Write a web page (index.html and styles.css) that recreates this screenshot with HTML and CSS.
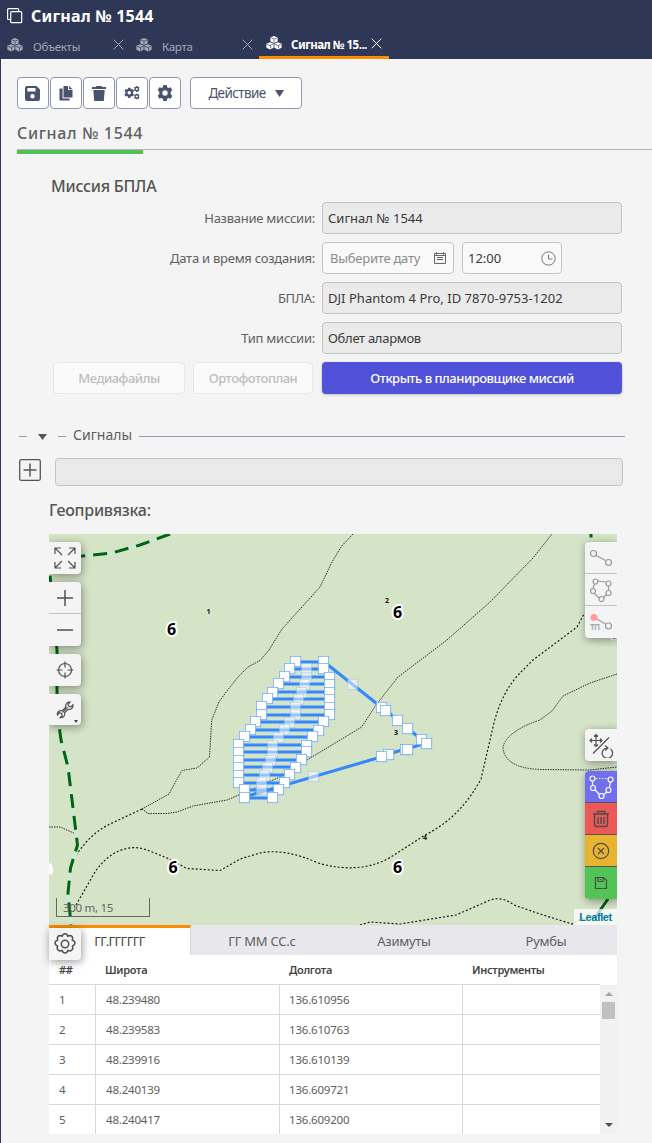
FILE: index.html
```html
<!DOCTYPE html>
<html lang="ru">
<head>
<meta charset="utf-8">
<title>Сигнал № 1544</title>
<link rel="stylesheet" href="styles.css">
</head>
<body>
<svg class="defs" width="0" height="0">
  <symbol id="cubes" viewBox="0 0 16 14"><path fill="currentColor" d="M8 0l3.600 1.400v4.100L8 7 4.400 5.500V1.400zM4 6.300l3.600 1.500v4L4 13.500.4 11.800v-4zM12 6.300l3.600 1.500v4L12 13.500l-3.600-1.700v-4z"/><path fill="none" stroke="#2f3756" stroke-width=".7" d="M5.200 2l2.800 1.100L10.800 2M8 3.600v2.700M1.200 8.400L4 9.500l2.800-1.100M4.600 10v2.500M9.200 8.400L12 9.500l2.800-1.100M12.600 10v2.500"/></symbol>
  <symbol id="close" viewBox="0 0 11 11"><path d="M.7.7l9.600 9.600M10.300.7L.7 10.300" stroke="currentColor" fill="none"/></symbol>
  <symbol id="gear" viewBox="0 0 16 16"><path fill="currentColor" fill-rule="evenodd" d="M6.300 0h3.400l.5 2.200 1.300.7 2.100-.7 1.700 3-1.600 1.500v2.600l1.600 1.500-1.700 3-2.100-.7-1.300.7-.5 2.200H6.300l-.5-2.200-1.300-.7-2.100.7-1.700-3 1.600-1.500V6.700L.7 5.200l1.700-3 2.100.7 1.300-.7zM8 5.300a2.700 2.700 0 100 5.400 2.700 2.700 0 000-5.400z"/></symbol>
</svg>
<header class="top">
  <div class="top-title">
    <svg width="16" height="16" viewBox="0 0 16 16" fill="none" stroke="#fff" stroke-width="1.200"><rect x="3.700" y="3.700" width="11" height="11" rx="1"/><path d="M3.700 11.500H1.600a1 1 0 01-1-1V1.600a1 1 0 011-1h9a1 1 0 011 1v2"/></svg>
    <span>Сигнал № 1544</span>
  </div>
  <nav class="tabs">
    <div class="tab"><svg class="cubes"><use href="#cubes"/></svg><span class="tab-name">Объекты</span><svg class="close"><use href="#close"/></svg></div>
    <div class="tab"><svg class="cubes"><use href="#cubes"/></svg><span class="tab-name">Карта</span><svg class="close"><use href="#close"/></svg></div>
    <div class="tab active"><svg class="cubes"><use href="#cubes"/></svg><span class="tab-name">Сигнал № 15...</span><svg class="close"><use href="#close"/></svg></div>
  </nav>
</header>
<main class="page">
  <div class="toolbar">
    <button class="tool"><svg width="15" height="15" viewBox="0 0 15 15"><path fill="currentColor" fill-rule="evenodd" d="M2 0h9.500L15 3.500V13a2 2 0 01-2 2H2a2 2 0 01-2-2V2a2 2 0 012-2zM2.300 2v3.500h8.200V2zM7.500 8a2.200 2.200 0 100 4.400 2.200 2.200 0 000-4.400z"/></svg></button>
    <button class="tool"><svg width="14" height="16" viewBox="0 0 14 16"><path fill="currentColor" d="M4.500 1H9v4h4.500v7.500h-9zM10 1l3.500 3.200H10zM.5 3.500H3.600v10h7V15.500H.5z"/></svg></button>
    <button class="tool"><svg width="14" height="15" viewBox="0 0 14 15"><path fill="currentColor" d="M4.500 0h5l.7 1H14v2H0V1h3.800zM1.300 4h11.400l-.9 11H2.200z"/></svg></button>
    <button class="tool"><svg width="16" height="14" viewBox="0 0 16 14"><use href="#gear" x="0" y="1.500" width="10.500" height="10.500"/><use href="#gear" x="9.800" y="0" width="6" height="6"/><use href="#gear" x="9.800" y="7.500" width="6" height="6"/></svg></button>
    <button class="tool"><svg width="16" height="16"><use href="#gear"/></svg></button>
    <button class="action"><span>Действие</span><svg width="9" height="7" viewBox="0 0 9 7"><path fill="currentColor" d="M0 0h9L4.500 7z"/></svg></button>
  </div>
  <h1 class="record"><span>Сигнал № 1544</span></h1>

  <section class="mission">
    <h2>Миссия БПЛА</h2>
    <div class="row"><label>Название миссии:</label><div class="field ro">Сигнал № 1544</div></div>
    <div class="row"><label>Дата и время создания:</label>
      <div class="field date"><span class="hint">Выберите дату</span><svg width="12" height="12" viewBox="0 0 12 12" fill="none" stroke="#666"><path d="M.5 1.500h11v10H.5zM.5 3.500h11M2.500 0v2.500M9.500 0v2.500M3 5.500h6M3 7.500h6"/></svg></div>
      <div class="field time"><span>12:00</span><svg width="15" height="15" viewBox="0 0 15 15" fill="none" stroke="#777"><circle cx="7.500" cy="7.500" r="6.700"/><path d="M7.500 3.500v4.500h4"/></svg></div>
    </div>
    <div class="row"><label>БПЛА:</label><div class="field ro drone">DJI Phantom 4 Pro, ID 7870-9753-1202</div></div>
    <div class="row"><label>Тип миссии:</label><div class="field ro type">Облет алармов</div></div>
    <div class="buttons"><button class="off media">Медиафайлы</button><button class="off ortho">Ортофотоплан</button><button class="primary">Открыть в планировщике миссий</button></div>
  </section>

  <div class="divider"><i class="dash"></i><svg width="9" height="6" viewBox="0 0 9 6"><path fill="#555" d="M0 0h9L4.500 6z"/></svg><i class="dash"></i><span>Сигналы</span><i class="rule"></i></div>
  <div class="signal"><svg width="22" height="22" viewBox="0 0 22 22" fill="none" stroke="#555" stroke-width="1.300"><rect x=".7" y=".7" width="20.600" height="20.600" rx="1.500"/><path d="M4.500 11h13M11 4.500v13" stroke-width="1.500"/></svg><div class="field ro"></div></div>

  <section class="geo">
    <h2>Геопривязка:</h2>
    <div class="map">
      <svg class="canvas" width="568" height="391" viewBox="49 534 568 391">
        <defs>
          <marker id="pt" markerUnits="userSpaceOnUse" markerWidth="12" markerHeight="12" refX="6" refY="6"><rect x=".8" y=".8" width="10.400" height="10.400" fill="#fff" stroke="#6aa6f8" stroke-width=".8"/></marker>
          <marker id="mid" markerUnits="userSpaceOnUse" markerWidth="12" markerHeight="12" refX="6" refY="6"><rect x=".8" y=".8" width="10.400" height="10.400" fill="#fff" fill-opacity=".5" stroke="#6aa6f8" stroke-opacity=".45" stroke-width=".8"/></marker>
        </defs>
        <g class="trail fine">
          <path d="M353 534L341.700 546 332 562 320 587 282 629 269 650 260 660.500 248 667 238 677 226.500 691.500 219 702 211.700 720 209.500 757 197 768 182 770.500 176 781 169 794 142 809"/>
          <path d="M142 809L148 813.500H167L177 812 193 806 227 800 240 794.500 280 777 307 760 361.700 727 376 705 398 677 447 640 490 602 533 558 552 534"/>
          <path d="M617 674L590 683 563 696 552 711 540 720Q507 731 503 747 504 768 540 769.500L590 770 617 767M49 827H60L76 834"/>
        </g>
        <g class="trail">
          <path d="M142 809L110 824Q91 833 77 854M76 905L95 872Q106 856 120 850.500T147 850L167 858 187 868.500 220 870.500 240 859 260 853Q285 848 318 863 360 875 391 857L425 835Q460 818 481 779L493 727Q501 692 521 672L533 660 549 648 577 627 584 614"/>
          <path d="M360 925L370 922 400 924 456 915 488 901Q501 895 514 905L540 914 572 924 585 917"/>
        </g>
        <path class="road-base" d="M170 534L140 545 112 553 82 556Q53 558 50 575L57 650 57 693 59 725 61 740 68 767 77.500 845 70.500 868 68 893 71 925"/>
        <path class="road" d="M170 534L140 545 112 553 82 556Q53 558 50 575L57 650 57 693 59 725 61 740 68 767 77.500 845 70.500 868 68 893 71 925"/>
        <path class="road solid" d="M591 534V537.500M608 899L594 919"/>
        <g class="quarter"><text x="167" y="635">6</text><text x="393" y="618">6</text><text x="168.500" y="873">6</text><text x="393" y="873">6</text></g>
        <path class="halo" d="M49 864q4 5 1 10M610 636q4 4 7 0"/>
        <path class="ink" d="M612 637q3 2 5-1"/>
        <g class="num"><text x="206.500" y="614">1</text><text x="385" y="603">2</text><text x="394" y="735">3</text><text x="423" y="840">4</text></g>
        <g class="flight">
          <path d="M295 662H323M289 669H323M284 677H329M279 684H329M273 692H329M268 699H329M261 707H329M261 715H329M255 722H323M250 730H318M244 737H312M238 745H306M238 752H306M238 760H302M238 767H296M238 775H289M238 783H284M244 790H278M244 798H272"/>
          <path d="M323 661L381 707 386 710 397 720 407 728 421 739 426 743 407 749 405 749 389 754 381 757 244 797"/>
        </g>
        <polyline class="pts" points="323.500,661.500 323.500,668.500 329.500,677.500 329.500,684.500 329.500,692.500 329.500,699.500 329.500,707.500 329.500,714.500 323.500,721.500 318.500,730.500 312.500,736.500 306.500,745.500 306.500,751.500 301.500,759.500 295.500,767.500 289.500,774.500 284.500,782.500 278.500,789.500 272.500,797.500"/>
        <polyline class="pts" points="295.500,661.500 289.500,668.500 284.500,676.500 278.500,683.500 272.500,692.500 267.500,698.500 261.500,706.500 261.500,714.500 255.500,721.500 250.500,729.500 244.500,736.500 238.500,744.500 238.500,752.500 238.500,760.500 238.500,767.500 238.500,775.500 238.500,782.500 244.500,789.500 244.500,797.500"/>
        <polyline class="pts" points="381.500,707.500 385.500,710.500 397.500,720.500 407.500,728.500 421.500,739.500 426.500,743.500 405.500,749.500 407.500,749.500 388.500,754.500 381.500,756.500"/>
        <polyline class="mids" points="306.500,668.500 306.500,677.500 304.500,684.500 301.500,692.500 298.500,699.500 295.500,707.500 295.500,714.500 289.500,722.500 284.500,729.500 278.500,737.500 272.500,745.500 272.500,752.500 270.500,760.500 267.500,767.500 264.500,775.500 261.500,782.500 261.500,789.500 352.500,684.500 313.500,776.500"/>
      </svg>

      <div class="ctl left full"><svg width="22" height="22" viewBox="0 0 22 22"><path d="M1 7V1h6M1 1l7 7M15 1h6v6M21 1l-7 7M1 15v6h6M1 21l7-7M21 15v6h-6M21 21l-7-7"/></svg></div>
      <div class="ctl left zoom"><div><svg width="18" height="18" viewBox="0 0 18 18"><path d="M1 9h16M9 1v16" stroke-width="1.500"/></svg></div><div><svg width="18" height="18" viewBox="0 0 18 18"><path d="M1 9h16" stroke-width="1.500"/></svg></div></div>
      <div class="ctl left locate"><svg width="18" height="18" viewBox="0 0 18 18"><circle cx="9" cy="9" r="6.500"/><path d="M9 .5v6M9 11.500v6M.5 9h6M11.500 9h6"/></svg></div>
      <div class="ctl left wrench"><svg width="18" height="18" viewBox="0 0 18 18"><path d="M6.300 9.700l3.500-3.500C9 3 11.500.7 14 1.200l-2 2.200 1 2 2 .4 1.900-2c.6 3-1.800 5.200-4.700 4.500l-3.600 3.500c.7 3-1.600 5.300-4.500 4.900l2-2.200-.5-2-2.200-.7-2 2.200c-.6-3 2-5 4.900-4.300zM6.500 11.500l5-5"/></svg><b></b></div>
      <div class="scale">300 m, 15</div>

      <div class="ctl right draw">
        <div><svg width="24" height="24" viewBox="0 0 24 24"><path d="M6.500 9l10 5.500"/><circle cx="4.500" cy="7.500" r="3"/><circle cx="19.500" cy="16.500" r="3"/></svg></div>
        <div><svg width="24" height="24" viewBox="0 0 24 24"><path d="M8.500 3l8 1M19.500 8v4M18 16l-4 4M10 20l-5-5M4 10l1.500-4"/><circle cx="6.500" cy="3.500" r="2.500"/><circle cx="19.500" cy="5.500" r="2.500"/><circle cx="19.500" cy="15" r="2.500"/><circle cx="12.500" cy="21" r="2.500"/><circle cx="4" cy="13" r="2.500"/></svg></div>
        <div><svg width="24" height="24" viewBox="0 0 24 24"><path d="M4.500 7l12 7"/><circle cx="19.500" cy="16" r="3"/><circle cx="5" cy="7.500" r="3.500" class="start"/></svg><em>ТП</em></div>
      </div>
      <div class="ctl right move"><svg width="26" height="26" viewBox="0 0 26 26"><path d="M2 8.500h12M8 2.500v12M4 6.500L2 8.500 4 10.500M12 6.500l2 2-2 2M6 4.500l2-2 2 2M6 12.500l2 2 2-2M5 21.500L21 5.500M22.500 17a5.200 5.200 0 11-3.500-1M17 13.500l3 2.500-3 2.500"/></svg></div>
      <div class="ctl right edit">
        <div class="violet"><svg width="26" height="26" viewBox="0 0 26 26"><path d="M4.500 7.500v3.500M7 16l5 5M15 21l4-3M21.500 13l1-5"/><path d="M8 4.500h12" stroke-dasharray="1.500 1.500"/><circle cx="4.500" cy="4.500" r="2.500"/><circle cx="22.500" cy="5.500" r="2.500"/><circle cx="5" cy="14" r="2.500"/><circle cx="20.500" cy="16" r="2.500"/><circle cx="13.500" cy="22" r="2.500"/></svg></div>
        <div class="red"><svg width="18" height="18" viewBox="0 0 18 18"><path stroke-width="1.400" d="M1 4h16M5.500 4V1.500h7V4M2.500 4.500v10q0 2 2 2h9q2 0 2-2v-10M6 7v7M9 7v7M12 7v7"/></svg></div>
        <div class="amber"><svg width="18" height="18" viewBox="0 0 18 18"><circle cx="9" cy="9" r="7.700"/><path d="M6 6l6 6M12 6l-6 6"/></svg></div>
        <div class="green"><svg width="14" height="14" viewBox="0 0 14 14"><path d="M1.500 1.500h8l3 3v8h-11zM4 1.500v4h5v-4M6.500 3v1"/></svg></div>
      </div>
      <div class="credit">Leaflet</div>
    </div>

    <div class="coords">
      <div class="formats"><span class="on">ГГ.ГГГГГГ</span><span>ГГ ММ СС.с</span><span>Азимуты</span><span>Румбы</span></div>
      <div class="ctl settings"><svg width="22" height="22" viewBox="0 0 22 22"><circle cx="11" cy="11" r="3.700"/><path d="M9 1.500q2-1.500 4 0l.8 1.700 1.900-.7q2.500 0 3 2.500l-.4 2 1.800 1q1.800 2-.3 4.200l-1.400.8.500 2q-.4 2.600-3 2.900l-2-.5-.9 1.800q-2 1.600-4 0l-.9-1.800-2 .5q-2.600-.3-3-2.900l.5-2-1.400-.8q-2.100-2.200-.3-4.200l1.800-1-.4-2q.5-2.500 3-2.500l1.900.7z"/></svg></div>
      <div class="grid head"><span>##</span><span>Широта</span><span>Долгота</span><span>Инструменты</span></div>
      <div class="body">
        <div class="rows">
          <div class="grid"><span>1</span><span>48.239480</span><span>136.610956</span><span></span></div>
          <div class="grid"><span>2</span><span>48.239583</span><span>136.610763</span><span></span></div>
          <div class="grid"><span>3</span><span>48.239916</span><span>136.610139</span><span></span></div>
          <div class="grid"><span>4</span><span>48.240139</span><span>136.609721</span><span></span></div>
          <div class="grid"><span>5</span><span>48.240417</span><span>136.609200</span><span></span></div>
        </div>
        <div class="scroll"><b class="up"></b><i></i><b class="down"></b></div>
      </div>
    </div>
  </section>
</main>
</body>
</html>
```
FILE: styles.css
```css
* { box-sizing: border-box; }
body { margin: 0; width: 652px; height: 1143px; overflow: hidden; background: #f4f4f4; color: #606060; font: 13px "Noto Sans", "Open Sans", sans-serif; letter-spacing: -.25px; }
h1, h2 { margin: 0; }
button { margin: 0; padding: 0; font: inherit; letter-spacing: inherit; }
svg { display: block; flex: none; }
.defs { position: absolute; }

.top { height: 59px; background: #2f3756; color: #fff; }
.top-title { height: 30px; padding: 1px 0 0 7px; display: flex; align-items: center; gap: 8px; font-size: 16px; font-weight: 700; letter-spacing: .2px; }
.tabs { display: flex; height: 29px; padding-left: 1px; }
.tab { width: 129px; display: flex; align-items: center; padding: 0 6px 0 6px; font-size: 11.500px; color: #a3a7b8; letter-spacing: -.3px; }
.cubes { width: 16px; height: 14px; margin-right: 10px; }
.tab-name { flex: 1; white-space: nowrap; }
.tab .tab-name { padding-top: 3px; }
.close { width: 11px; height: 11px; }
.tab.active { width: 130px; color: #fff; border-bottom: 3px solid #ff8c00; padding: 0 7px 0; }
.tab.active .tab-name { padding-top: 2px; font-weight: 700; font-size: 11.500px; letter-spacing: -.5px; }
.tab.active .cubes { margin-right: 9px; }

.page { height: 1084px; border-left: 1px solid #2f3756; padding-top: 18px; }
.toolbar { display: flex; gap: 1px; padding-left: 16px; color: #4a526d; }
.tool, .action { height: 32px; border: 1px solid #9297ad; border-radius: 4px; background: #fff; color: inherit; display: flex; align-items: center; justify-content: center; }
.tool { width: 32px; }
.tool svg { margin-right: 1px; }
.action { width: 112px; margin-left: 8px; gap: 9px; font-size: 13.500px; letter-spacing: -.6px; }
.record { margin: 13px 0 0 16px; height: 32px; font-size: 16px; font-weight: 500; line-height: 22px; letter-spacing: .65px; display: flex; background: linear-gradient(#b2b2c6, #b2b2c6) 0 27px / 100% 1px no-repeat; width: 635px; }
.record span { border-bottom: 4px solid #55c154; height: 32px; width: 126px; white-space: nowrap; }

h2 { font-size: 16px; font-weight: 500; letter-spacing: -.25px; line-height: 24px; color: #555; }
.mission { padding: 20px 0 0 50px; }
.mission h2 { height: 28px; }
.row { display: flex; height: 40px; align-items: flex-start; }
.row label { width: 264px; margin-right: 7px; line-height: 32px; text-align: right; }
.field { height: 32px; border: 1px solid #c4c4c4; border-radius: 4px; background: #f9f9f9; color: #3a3a3a; display: flex; align-items: center; padding: 0 5px; }
.field.ro { background: #eaeaea; width: 300px; letter-spacing: 0; }
.field.drone { letter-spacing: .03px; }
.field.type { letter-spacing: -.3px; }
.date { width: 132px; padding: 0 7px; justify-content: space-between; }
.time { width: 100px; margin-left: 8px; justify-content: space-between; letter-spacing: 0; }
.hint { color: #8b8b8b; }
.buttons { display: flex; padding-left: 2px; }
.buttons button { height: 32px; border-radius: 4px; }
.off { border: 1px solid #e6e6e6; background: #fafafa; color: #bdbdbd; font-weight: 500; }
.buttons .media { width: 132px; letter-spacing: -.5px; }
.buttons .ortho { width: 120px; margin: 0 9px 0 8px; letter-spacing: -.5px; }
.primary { width: 300px; border: 0; background: #5050d8; color: #fff; font-weight: 500; letter-spacing: -.5px; box-shadow: 0 1px 3px #0003; }

.divider { display: flex; height: 20px; align-items: center; margin: 32px 0 0 18px; width: 606px; font-size: 14px; letter-spacing: 0; }
.dash { width: 8px; height: 1px; background: #9a9ab8; margin-top: 1px; }
.divider svg { margin: 2px 11px 0; }
.divider span { margin: -4px 7px 0; }
.rule { flex: 1; height: 1px; background: #9a9ab8; margin-top: 1px; }
.signal { display: flex; margin: 12px 0 0 18px; gap: 14px; height: 28px; align-items: center; }
.signal svg { margin-top: -4px; }
.signal .field.ro { width: 568px; height: 28px; }

.geo { margin: 11px 0 0 48px; width: 568px; }
.geo h2 { height: 37px; line-height: 26px; }
.map { position: relative; height: 391px; background: #d5e3c7; overflow: hidden; }
.trail { fill: none; stroke: #1c1c1c; stroke-width: 1.200; stroke-dasharray: 2 2; }
.trail.fine { stroke-width: .9; stroke-dasharray: 1.500 1; }
.road-base { fill: none; stroke: #cdebd4; stroke-width: 3.500; }
.road { fill: none; stroke: #006413; stroke-width: 3; stroke-dasharray: 14 8; }
.road.solid { stroke-dasharray: none; }
.quarter { font: 700 16px "Noto Sans", sans-serif; fill: #000; stroke: #fff; stroke-width: 4px; paint-order: stroke; stroke-linejoin: round; letter-spacing: 0; }
.halo { fill: none; stroke: #fff; stroke-width: 4; }
.ink { fill: none; stroke: #000; stroke-width: 1.500; }
.num { font: 700 7px "Noto Sans", sans-serif; fill: #111; letter-spacing: 0; }
.flight { fill: none; stroke: #3388ff; stroke-width: 3; }
.pts, .mids { fill: none; stroke: none; }
.pts { marker: url(#pt); }
.mids { marker: url(#mid); }

.ctl { position: absolute; background: #f4f4f4; box-shadow: 1px 2px 9px #0006; display: flex; flex-direction: column; align-items: center; justify-content: center; width: 32px; height: 32px; }
.ctl svg { fill: none; stroke: #505050; stroke-width: 1.200; }
.ctl > div { height: 32px; width: 32px; display: flex; align-items: center; justify-content: center; }
.left { left: 0; border-radius: 0 4px 4px 0; }
.right { right: 0; border-radius: 4px 0 0 4px; }
.full { top: 8px; }
.zoom { top: 48px; height: 64px; }
.zoom > div + div { box-shadow: 0 -1px #c4c4c4; }
.locate { top: 120px; }
.wrench { top: 160px; height: 31px; }
.wrench b { position: absolute; right: 3px; bottom: 2px; border: solid transparent; border-width: 3px 2.500px 0; border-top-color: #444; }
.scale { position: absolute; left: 7px; top: 364px; width: 94px; height: 19px; border: 1px solid #666; border-top: 0; font-size: 11.500px; line-height: 20px; padding-left: 6px; letter-spacing: -.3px; color: #666; }
.draw { top: 8px; height: 96px; }
.draw > div { position: relative; }
.draw > div + div { box-shadow: 0 -1px #c4c4c4; }
.draw svg { stroke: #9a9a9a; }
.draw svg circle { fill: #f4f4f4; }
.draw svg .start { fill: #ff9e9e; stroke: none; }
.draw em { position: absolute; left: 5px; bottom: 7px; font: 700 8px/8px "Noto Sans", sans-serif; color: #aaa; letter-spacing: -.5px; }
.move { top: 195px; }
.edit { top: 237px; height: 128px; overflow: hidden; }
.edit > div + div { box-shadow: 0 -1px #555; }
.edit svg { stroke: #4c4c4c; }
.violet { background: #7070ee; }
.edit .violet svg { stroke: #fff; }
.red { background: #ec5757; }
.amber { background: #e8b32f; }
.green { background: #52c355; }
.credit { position: absolute; right: 0; bottom: 0; height: 16px; width: 43px; background: #fffb; color: #0078a8; font: 700 11px/16px "Liberation Sans", sans-serif; letter-spacing: -.4px; text-align: center; }

.coords { position: relative; height: 209px; background: #fff; }
.formats { display: grid; grid-template-columns: 142px 1fr 1fr 1fr; height: 30px; background: #e8e8ec; text-align: center; line-height: 33px; font-size: 13px; }
.formats span { height: 30px; }
.formats .on { background: #fff; border-top: 3px solid #ff8c00; line-height: 27px; border-right: 1px solid #d8d8dc; letter-spacing: -.6px; color: #444; }
.settings { left: 0; top: 3px; border-radius: 0 4px 4px 0; z-index: 1; }
.settings svg { stroke-width: 1.500; }
.grid { display: grid; grid-template-columns: 46px 184px 183px 1fr; height: 30px; font-size: 11.500px; line-height: 29px; letter-spacing: -.2px; border-bottom: 1px solid #d8d8d8; }
.grid span { padding-left: 10px; }
.grid span + span { border-left: 1px solid #d8d8d8; }
.grid span:nth-child(3) { padding-left: 9px; }
.grid.head { width: 551px; font-size: 11px; font-weight: 600; color: #444; letter-spacing: -.3px; }
.grid.head span + span { border-left-color: transparent; padding-left: 9px; }
.body { display: flex; height: 149px; overflow: hidden; }
.rows { flex: 1; }
.scroll { width: 17px; background: #f1f1f1; display: flex; flex-direction: column; align-items: center; height: 149px; }
.scroll i { width: 13px; height: 17px; background: #c1c1c1; margin-top: 6px; }
.scroll b { border: 4px solid transparent; border-top-width: 0; }
.scroll .up { border-bottom-color: #a3a3a3; margin-top: 7px; }
.scroll .down { border-width: 4px 4px 0; border-top-color: #505050; margin: auto 0 7px; }
```
